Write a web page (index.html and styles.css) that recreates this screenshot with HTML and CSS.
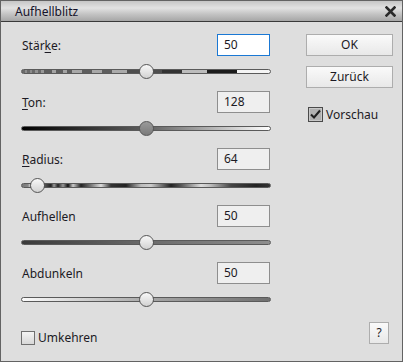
FILE: index.html
```html
<!DOCTYPE html>
<html lang="de">
<head>
    <meta charset="UTF-8">
    <title>Aufhellblitz</title>
    <link rel="stylesheet" href="styles.css">
</head>
<body>
    <div class="dialog">
        <div class="titlebar">
            <span class="title">Aufhellblitz</span>
            <svg class="close" width="11" height="11" viewBox="0 0 11 11">
                <path d="M1.5 1.5 L9.5 9.5 M9.5 1.5 L1.5 9.5" stroke="#2a2a2a" stroke-width="2.6" stroke-linecap="square"/>
            </svg>
        </div>

        <div class="content">
            <div class="controls">
                <div class="row">
                    <div class="row-head">
                        <label for="staerke">Stär<u>k</u>e:</label>
                        <input type="text" id="staerke" class="field active" value="50">
                    </div>
                    <div class="slider">
                        <div class="track track-staerke"></div>
                        <div class="thumb" style="left: 50%"></div>
                    </div>
                </div>

                <div class="row">
                    <div class="row-head">
                        <label for="ton"><u>T</u>on:</label>
                        <input type="text" id="ton" class="field" value="128">
                    </div>
                    <div class="slider">
                        <div class="track track-ton"></div>
                        <div class="thumb thumb-dark" style="left: 50%"></div>
                    </div>
                </div>

                <div class="row">
                    <div class="row-head">
                        <label for="radius"><u>R</u>adius:</label>
                        <input type="text" id="radius" class="field" value="64">
                    </div>
                    <div class="slider">
                        <div class="track track-radius"></div>
                        <div class="thumb" style="left: 6.4%"></div>
                    </div>
                </div>

                <div class="row">
                    <div class="row-head">
                        <label for="aufhellen">Aufhellen</label>
                        <input type="text" id="aufhellen" class="field" value="50">
                    </div>
                    <div class="slider">
                        <div class="track track-aufhellen"></div>
                        <div class="thumb" style="left: 50%"></div>
                    </div>
                </div>

                <div class="row">
                    <div class="row-head">
                        <label for="abdunkeln">Abdunkeln</label>
                        <input type="text" id="abdunkeln" class="field" value="50">
                    </div>
                    <div class="slider">
                        <div class="track track-abdunkeln"></div>
                        <div class="thumb" style="left: 50%"></div>
                    </div>
                </div>
            </div>

            <div class="actions">
                <button class="btn">OK</button>
                <button class="btn">Zurück</button>
                <label class="check check-preview">
                    <svg width="15" height="15" viewBox="0 0 15 15">
                        <rect x="0.5" y="0.5" width="14" height="14" fill="#b0b0b0" stroke="#4a4a4a"/>
                        <rect x="1.5" y="1.5" width="12" height="12" fill="none" stroke="#c8c8c8"/>
                        <path d="M3 7.5 L6 10.5 L12 3.5" fill="none" stroke="#1e1e1e" stroke-width="2"/>
                    </svg>
                    Vorschau
                </label>
            </div>
        </div>

        <div class="footer">
            <label class="check">
                <span class="box"></span>
                Umkehren
            </label>
            <button class="btn btn-help">?</button>
        </div>
    </div>
</body>
</html>
```

FILE: styles.css
```css
html, body {
    margin: 0;
    padding: 0;
}
body {
    font-family: 'Noto Sans', 'Open Sans', sans-serif;
    font-size: 12px;
    color: #1c1a24;
    background-color: #dedede;
}
.dialog {
    width: 403px;
    height: 362px;
    box-sizing: border-box;
    border: 1px solid #636363;
    background-color: #dedede;
    display: flex;
    flex-direction: column;
}
.titlebar {
    height: 20px;
    border-bottom: 1px solid #3a3a3a;
    background: linear-gradient(#c6c6c6, #e2e2e2 35%, #c4c4c4 65%, #a6a6a6);
    display: flex;
    align-items: center;
    justify-content: space-between;
    padding: 0 6px 0 14px;
}
.title {
    font-size: 12px;
    color: #14122a;
}
.close {
    display: block;
}
.content {
    display: flex;
    padding: 12px 0 0 20px;
}
.controls {
    width: 250px;
}
.row {
    height: 57px;
}
.row-head {
    display: flex;
    align-items: center;
    justify-content: space-between;
    height: 22px;
    padding-right: 1px;
}
.row-head label {
    font-size: 12px;
    padding-left: 1px;
}
u {
    text-decoration-thickness: 1px;
    text-underline-offset: 2px;
}
.field {
    width: 53px;
    height: 22px;
    box-sizing: border-box;
    border: 1px solid #8e8e8e;
    background-color: #efefef;
    font-family: inherit;
    font-size: 12px;
    color: #1c1a24;
    padding: 0 0 1px 6px;
    margin: 0;
    outline: none;
}
.field.active {
    border-color: #1a78d4;
    background-color: #ffffff;
}
.slider {
    position: relative;
    height: 15px;
    margin-top: 8px;
}
.track {
    position: absolute;
    left: 0;
    right: 0;
    top: 5px;
    height: 5px;
    box-sizing: border-box;
    border: 1px solid #5a5a5a;
    border-radius: 3px;
}
.track-staerke {
    background: linear-gradient(to right,
        #6a6a6a 0, #6a6a6a 3px, #8c8c8c 3px, #8c8c8c 5px,
        #6a6a6a 5px, #6a6a6a 8px, #8c8c8c 8px, #8c8c8c 10px,
        #6a6a6a 10px, #6a6a6a 13px, #929292 13px, #929292 16px,
        #6a6a6a 16px, #6a6a6a 19px, #989898 19px, #989898 22px,
        #5e5e5e 22px, #5e5e5e 30px, #a4a4a4 30px, #a4a4a4 34px,
        #5e5e5e 34px, #5e5e5e 41px, #a4a4a4 41px, #a4a4a4 45px,
        #5e5e5e 45px, #5e5e5e 50px, #a8a8a8 50px, #a8a8a8 60px,
        #5e5e5e 60px, #5e5e5e 70px, #a8a8a8 70px, #a8a8a8 80px,
        #5e5e5e 80px, #5e5e5e 90px, #aaaaaa 90px, #aaaaaa 105px,
        #4e4e4e 105px, #4e4e4e 140px, #333333 140px, #333333 160px,
        #bcbcbc 160px, #bcbcbc 185px, #1c1c1c 185px, #1c1c1c 215px,
        #f4f4f4 215px, #f4f4f4 100%);
}
.track-ton {
    background: linear-gradient(to right, #000000, #5e5e5e 50%, #ffffff);
}
.track-radius {
    background: linear-gradient(to right,
        #777777 0, #888888 6px, #cccccc 8px, #555555 10px,
        #555555 23px, #222222 29px, #999999 32px, #222222 36px,
        #999999 41px, #111111 46px, #cccccc 51px, #222222 59px,
        #777777 69px, #dddddd 79px, #333333 89px, #222222 104px,
        #bbbbbb 119px, #cccccc 129px, #222222 149px, #555555 159px,
        #dddddd 179px, #bbbbbb 189px, #444444 209px, #222222 234px,
        #333333 100%);
}
.track-aufhellen {
    background: linear-gradient(to right, #3a3a3a, #6a6a6a 50%, #8e8e8e);
}
.track-abdunkeln {
    background: linear-gradient(to right, #fbfbfb, #a8a8a8 50%, #707070);
}
.thumb {
    position: absolute;
    top: 0;
    width: 15px;
    height: 15px;
    margin-left: -7px;
    box-sizing: border-box;
    border: 1px solid #555555;
    border-radius: 50%;
    background: linear-gradient(#f8f8f8, #d2d2d2);
}
.thumb-dark {
    background: linear-gradient(#9a9a9a, #7a7a7a);
}
.actions {
    display: flex;
    flex-direction: column;
    width: 87px;
    margin-left: 35px;
}
.btn {
    height: 22px;
    box-sizing: border-box;
    border: 1px solid #adadad;
    background: linear-gradient(#fafafa, #e8e8e8);
    font-family: inherit;
    font-size: 12px;
    color: #1c1a24;
    padding: 0 0 1px;
    margin: 0 0 10px;
}
.check {
    display: flex;
    align-items: center;
    gap: 3px;
    font-size: 12px;
}
.check-preview {
    margin: 8px 0 0 2px;
}
.check svg {
    display: block;
}
.box {
    width: 14px;
    height: 14px;
    box-sizing: border-box;
    border: 1px solid #707070;
    background: linear-gradient(#f4f4f4, #d8d8d8);
}
.footer {
    margin-top: auto;
    display: flex;
    align-items: flex-end;
    justify-content: space-between;
    padding: 0 13px 17px 20px;
}
.footer .check {
    margin-bottom: -2px;
}
.btn-help {
    width: 20px;
    margin: 0;
}
```
